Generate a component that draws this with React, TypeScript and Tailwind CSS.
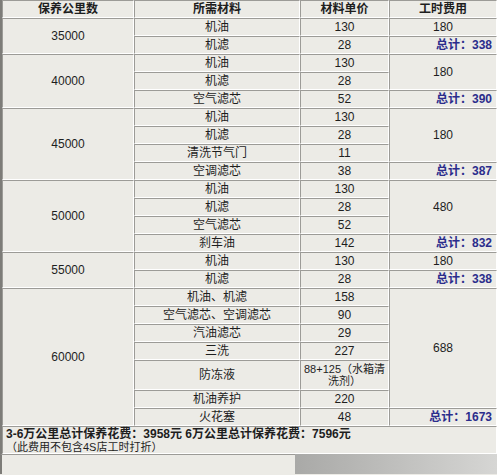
type Group = {
  km: string
  items: [string, string][]
  labor: string
  total: string
}

const groups: Group[] = [
  { km: "35000", items: [["机油", "130"], ["机滤", "28"]], labor: "180", total: "338" },
  {
    km: "40000",
    items: [["机油", "130"], ["机滤", "28"], ["空气滤芯", "52"]],
    labor: "180",
    total: "390",
  },
  {
    km: "45000",
    items: [["机油", "130"], ["机滤", "28"], ["清洗节气门", "11"], ["空调滤芯", "38"]],
    labor: "180",
    total: "387",
  },
  {
    km: "50000",
    items: [["机油", "130"], ["机滤", "28"], ["空气滤芯", "52"], ["刹车油", "142"]],
    labor: "480",
    total: "832",
  },
  { km: "55000", items: [["机油", "130"], ["机滤", "28"]], labor: "180", total: "338" },
  {
    km: "60000",
    items: [
      ["机油、机滤", "158"],
      ["空气滤芯、空调滤芯", "90"],
      ["汽油滤芯", "29"],
      ["三洗", "227"],
      ["防冻液", "88+125"],
      ["机油养护", "220"],
      ["火花塞", "48"],
    ],
    labor: "688",
    total: "1673",
  },
]

// inset cell look of an old html table
const cell =
  "border border-t-[#9c9b97] border-l-[#9c9b97] border-b-white border-r-white p-0 text-center align-middle"

export default function App() {
  return (
    <div className="h-[475px] w-[497px] overflow-hidden bg-[#ecebe6] font-['Liberation_Sans','Noto_Sans_CJK_SC',sans-serif] text-[12px] leading-[14px] text-[#1e1e1e]">
      <table className="w-[497px] table-fixed border-separate border-spacing-0 border-l-2 border-l-[#7d7c78]">
        <colgroup>
          <col className="w-[132px]" />
          <col className="w-[166px]" />
          <col className="w-[89px]" />
          <col className="w-[108px]" />
        </colgroup>
        <thead>
          <tr className="h-[18px]">
            <th className={`${cell} font-bold`}>保养公里数</th>
            <th className={`${cell} font-bold`}>所需材料</th>
            <th className={`${cell} font-bold`}>材料单价</th>
            <th className={`${cell} font-bold`}>工时费用</th>
          </tr>
        </thead>
        <tbody>
          {groups.map((g) =>
            g.items.map(([name, price], i) => {
              const last = i === g.items.length - 1
              const tall = price === "88+125"
              return (
                <tr key={g.km + name} className={tall ? "h-[30px]" : "h-[18px]"}>
                  {i === 0 && (
                    <td rowSpan={g.items.length} className={cell}>
                      {g.km}
                    </td>
                  )}
                  <td className={cell}>{name}</td>
                  <td className={cell}>
                    {tall ? (
                      <span className="block text-[11px] leading-[12px]">
                        88+125（水箱清
                        <br />
                        洗剂）
                      </span>
                    ) : (
                      price
                    )}
                  </td>
                  {i === 0 && g.items.length > 1 && (
                    <td rowSpan={g.items.length - 1} className={cell}>
                      {g.labor}
                    </td>
                  )}
                  {last && (
                    <td className={`${cell} pr-1 text-right font-bold text-[#2b2d8c]`}>
                      总计：{g.total}
                    </td>
                  )}
                </tr>
              )
            })
          )}
          <tr className="h-[28px]">
            <td colSpan={4} className={`${cell} px-[3px] text-left`}>
              <div className="text-[12px] font-bold leading-[13px]">
                3-6万公里总计保养花费：3958元 6万公里总计保养花费：7596元
              </div>
              <div className="text-[11px] leading-[12px]">（此费用不包含4S店工时打折）</div>
            </td>
          </tr>
        </tbody>
      </table>
      <div className="flex h-[20px]">
        <div className="w-[295px] border-t border-l-2 border-t-[#9c9b97] border-l-[#7d7c78] bg-[#ecebe6]" />
        <div className="flex-1 bg-gradient-to-r from-[#a9a9a7] to-[#d6d6d4]" />
      </div>
    </div>
  )
}
